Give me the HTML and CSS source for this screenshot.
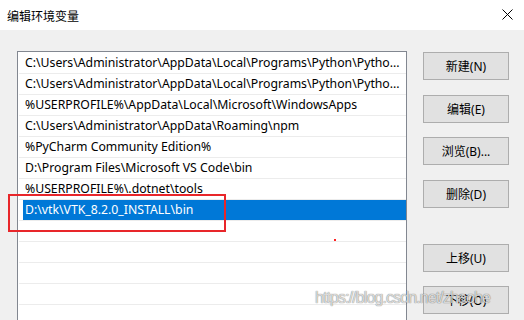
FILE: index.html
```html
<!DOCTYPE html>
<html lang="zh-CN">
<head>
  <meta charset="UTF-8">
  <title>编辑环境变量</title>
  <link rel="stylesheet" href="styles.css">
</head>
<body>
  <div class="dialog">
    <div class="titlebar">
      <span class="title">编辑环境变量</span>
      <svg class="close" width="11" height="11" viewBox="0 0 11 11">
        <path d="M0.5 0.5 L10.5 10.5 M10.5 0.5 L0.5 10.5" stroke="#000" stroke-width="1" fill="none"/>
      </svg>
    </div>

    <div class="content">
      <div class="path-list">
        <div class="row"><div class="row-text">C:\Users\Administrator\AppData\Local\Programs\Python\Pytho...</div></div>
        <div class="row"><div class="row-text">C:\Users\Administrator\AppData\Local\Programs\Python\Pytho...</div></div>
        <div class="row"><div class="row-text">%USERPROFILE%\AppData\Local\Microsoft\WindowsApps</div></div>
        <div class="row"><div class="row-text">C:\Users\Administrator\AppData\Roaming\npm</div></div>
        <div class="row"><div class="row-text">%PyCharm Community Edition%</div></div>
        <div class="row"><div class="row-text">D:\Program Files\Microsoft VS Code\bin</div></div>
        <div class="row"><div class="row-text">%USERPROFILE%\.dotnet\tools</div></div>
        <div class="row selected"><div class="row-text">D:\vtk\VTK_8.2.0_INSTALL\bin</div></div>
        <div class="row"><div class="row-text"></div></div>
        <div class="row"><div class="row-text"></div></div>
        <div class="row"><div class="row-text"></div></div>
        <div class="row"><div class="row-text"></div></div>
      </div>

      <div class="buttons">
        <button class="btn">新建(N)</button>
        <button class="btn">编辑(E)</button>
        <button class="btn">浏览(B)...</button>
        <button class="btn">删除(D)</button>
        <button class="btn btn-gap">上移(U)</button>
        <button class="btn">下移(O)</button>
      </div>
    </div>

    <div class="highlight"></div>
    <div class="dot"></div>
    <div class="watermark">https://blog.csdn.net/zhaohe</div>
  </div>
</body>
</html>
```

FILE: styles.css
```css
body {
  margin: 0;
  background-color: #f0f0f0;
  font-family: "Noto Sans", "Noto Sans CJK SC", sans-serif;
  font-size: 12px;
  color: #000;
}
.dialog {
  position: relative;
  width: 524px;
  height: 320px;
  overflow: hidden;
}
.titlebar {
  height: 30px;
  background-color: #fff;
  display: flex;
  align-items: center;
  justify-content: space-between;
  padding: 0 11px 0 7px;
}
.title {
  font-family: "Noto Sans CJK SC", sans-serif;
  font-size: 12px;
}
.close {
  display: block;
  margin-top: -1px;
}
.content {
  display: flex;
  align-items: flex-start;
  padding: 21px 0 0 17px;
}
.path-list {
  width: 390px;
  height: 300px;
  background-color: #fff;
  border: 1px solid #828790;
  padding: 1px 0 0 1px;
  box-sizing: border-box;
  flex-shrink: 0;
  font-size: 12.25px;
}
.row {
  padding-left: 4px;
  border-bottom: 1px solid #ececec;
}
.row-text {
  height: 20px;
  line-height: 20px;
  padding-left: 2px;
  white-space: nowrap;
  overflow: hidden;
}
.row.selected .row-text {
  background-color: #0078d7;
  color: #fff;
}
.buttons {
  display: flex;
  flex-direction: column;
  gap: 14.67px;
  margin: 1px 0 0 16px;
}
.btn {
  width: 86px;
  height: 28px;
  background-color: #e1e1e1;
  border: 1px solid #adadad;
  font-family: "Noto Sans", "Noto Sans CJK SC", sans-serif;
  font-size: 12px;
  color: #000;
  padding: 0;
}
.btn-gap {
  margin-top: 21px;
}
.highlight {
  position: absolute;
  left: 8px;
  top: 194px;
  width: 214px;
  height: 34px;
  border: 2px solid #e8262a;
}
.dot {
  position: absolute;
  left: 334px;
  top: 239px;
  width: 2px;
  height: 2px;
  background-color: #f22;
}
.watermark {
  position: absolute;
  left: 315px;
  top: 289px;
  font-family: "Liberation Sans", sans-serif;
  font-size: 16px;
  letter-spacing: -0.9px;
  color: rgba(245, 245, 245, 0.8);
  text-shadow: 0 0 1px rgba(0, 0, 0, 0.45), 0 0 1px rgba(0, 0, 0, 0.3);
  white-space: nowrap;
}
```
